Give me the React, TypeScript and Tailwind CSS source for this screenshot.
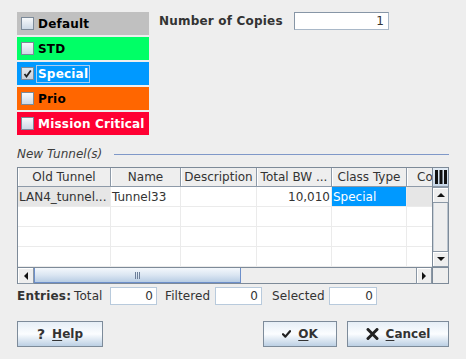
import React from "react";

const items = [
  { label: "Default", bg: "bg-[#c0c0c0]", fg: "text-black", checked: false },
  { label: "STD", bg: "bg-[#00ff66]", fg: "text-black", checked: false },
  { label: "Special", bg: "bg-[#0099ff]", fg: "text-white", checked: true },
  { label: "Prio", bg: "bg-[#ff6600]", fg: "text-black", checked: false },
  { label: "Mission Critical", bg: "bg-[#ff0033]", fg: "text-white", checked: false },
];

function CheckBox({ checked }: { checked: boolean }) {
  return (
    <div
      className={
        "w-[13px] h-[13px] shrink-0 border border-[#7c8a99] flex items-center justify-center " +
        (checked
          ? "bg-gradient-to-b from-[#e4e8ec] to-[#c7d0da]"
          : "bg-gradient-to-b from-[#f7f9fb] to-[#cdd9e6]")
      }
    >
      {checked && (
        <svg width="9" height="9" viewBox="0 0 9 9">
          <path d="M1.5 5 L3.5 7.5 L7.8 1.5" stroke="#222" strokeWidth="1.8" fill="none" />
        </svg>
      )}
    </div>
  );
}

function Arrow({ dir }: { dir: "up" | "down" | "left" | "right" }) {
  const d = {
    up: "M0 4 L4 0 L8 4 Z",
    down: "M0 0 L8 0 L4 4 Z",
    left: "M4 0 L4 8 L0 4 Z",
    right: "M0 0 L4 4 L0 8 Z",
  }[dir];
  const vert = dir === "up" || dir === "down";
  return (
    <svg width={vert ? 8 : 4} height={vert ? 4 : 8} viewBox={vert ? "0 0 8 4" : "0 0 4 8"}>
      <path d={d} fill="#111" />
    </svg>
  );
}

function ScrollButton({ dir, className = "" }: { dir: "up" | "down" | "left" | "right"; className?: string }) {
  return (
    <div
      className={
        "w-[16px] h-[16px] bg-[#eeeeee] border border-[#8a97a5] shadow-[inset_1px_1px_0_#ffffff] flex items-center justify-center " +
        className
      }
    >
      <Arrow dir={dir} />
    </div>
  );
}

const cols = [
  { w: "w-[93px]", head: "Old Tunnel" },
  { w: "w-[70px]", head: "Name" },
  { w: "w-[76px]", head: "Description" },
  { w: "w-[75px]", head: "Total BW ..." },
  { w: "w-[75px]", head: "Class Type" },
  { w: "w-[25px]", head: "Co" },
];

function Field({ value, w }: { value: string; w: string }) {
  return (
    <div className={"h-[18px] shrink-0 bg-white border border-[#b8cadc] flex items-center justify-end pr-[3px] " + w}>
      {value}
    </div>
  );
}

function Button({ icon, mn, rest, w }: { icon: React.ReactNode; mn: string; rest: string; w: string }) {
  return (
    <button
      type="button"
      className={
        "h-[26px] border border-[#7d8b9a] bg-gradient-to-b from-[#e6eef6] via-[#fbfdff] to-[#bcd0e4] flex items-center justify-center gap-[7px] font-bold text-[#333333] " +
        w
      }
    >
      {icon}
      <span>
        <span className="underline underline-offset-2">{mn}</span>
        {rest}
      </span>
    </button>
  );
}

export default function App() {
  return (
    <div className="w-[466px] h-[359px] bg-[#eeeeee] text-[12px] leading-none text-[#333333] overflow-hidden pt-[12px] px-[17px] [font-family:'DejaVu_Sans',sans-serif]">
      <div className="flex">
        <div className="w-[132px] flex flex-col gap-[2px]">
          {items.map((it) => (
            <div key={it.label} className={"h-[23px] flex items-center pl-[4px] gap-[2px] font-bold tracking-[0.2px] whitespace-nowrap " + it.bg + " " + it.fg}>
              <CheckBox checked={it.checked} />
              <span
                className={
                  "px-[1px] py-[2px] border " + (it.checked ? "border-[#a8cdf0]" : "border-transparent")
                }
              >
                {it.label}
              </span>
            </div>
          ))}
        </div>
        <div className="ml-[10px] h-[18px] flex items-center">
          <span className="w-[135px] font-bold tracking-[0.2px]">Number of Copies</span>
          <div className="w-[95px] h-[18px] bg-white border border-[#8796a6] border-b-[#a9b8c8] border-r-[#a9b8c8] flex items-center justify-end pr-[4px]">
            1
          </div>
        </div>
      </div>

      <div className="mt-[12px] h-[14px] flex items-center">
        <span className="italic text-[#3d3d3d]">New Tunnel(s)</span>
        <div className="flex-1 ml-[12px] h-px bg-[#7f98c8]" />
      </div>

      <div className="mt-[6px] w-[432px] border border-[#7d8a98] flex flex-col bg-white">
        <div className="flex">
          <div className="w-[414px] flex flex-col">
            <div className="flex h-[19px] bg-[#eeeeee] border-b border-[#8e9aa8]">
              {cols.map((c, i) => (
                <div
                  key={c.head}
                  className={
                    "h-full flex items-center overflow-hidden whitespace-nowrap shadow-[inset_1px_0_0_#ffffff] " +
                    c.w +
                    (i < cols.length - 1 ? " border-r border-[#8e9aa8] justify-center" : " pl-[10px]")
                  }
                >
                  {c.head}
                </div>
              ))}
            </div>
            {[0, 1, 2, 3].map((r) => (
              <div key={r} className="flex h-[20px] border-b border-[#ebebeb]">
                {cols.map((c, i) => {
                  let cls = "h-full flex items-center overflow-hidden whitespace-nowrap " + c.w;
                  if (i < cols.length - 1) cls += " border-r border-[#ebebeb]";
                  let text = "";
                  if (r === 0) {
                    if (i === 0) {
                      cls += " bg-[#e6e6e6] pl-[1px]";
                      text = "LAN4_tunnel...";
                    } else if (i === 1) {
                      cls += " pl-[1px]";
                      text = "Tunnel33";
                    } else if (i === 3) {
                      cls += " justify-end pr-[1px]";
                      text = "10,010";
                    } else if (i === 4) {
                      cls += " bg-[#0099ff] text-white pl-[1px]";
                      text = "Special";
                    } else if (i === 5) {
                      cls += " bg-[#e6e6e6]";
                    }
                  }
                  return (
                    <div key={i} className={cls}>
                      {text}
                    </div>
                  );
                })}
              </div>
            ))}
          </div>
          <div className="w-[16px] flex flex-col border-l border-[#7d8a98] bg-[#eeeeee]">
            <div className="h-[19px] bg-gradient-to-b from-[#e3ecf5] to-[#c6d6e7] border-b border-[#8e9aa8] flex items-center justify-center">
              <svg width="12" height="14" viewBox="0 0 12 14">
                <rect x="0" y="0" width="3" height="14" fill="#111" />
                <rect x="4.5" y="0" width="3" height="14" fill="#111" />
                <rect x="9" y="0" width="3" height="14" fill="#111" />
              </svg>
            </div>
            <ScrollButton dir="up" className="w-[15px] border-l-0" />
            <div className="flex-1 bg-[#eeeeee] border-r border-[#b8c2cc] shadow-[inset_1px_0_0_#c9d1d9]" />
            <ScrollButton dir="down" className="w-[15px] border-l-0" />
          </div>
        </div>
        <div className="flex h-[16px] border-t border-[#7d8a98] bg-[#eeeeee]">
          <ScrollButton dir="left" className="h-[15px] border-t-0 border-l-0" />
          <div className="w-[207px] h-[15px] border border-t-0 border-[#6d8fca] bg-gradient-to-b from-[#f4f8fc] via-[#dbe6f2] to-[#b8cde4] flex items-center justify-center gap-[1px]">
            <div className="w-px h-[7px] bg-[#6d7f99]" />
            <div className="w-px h-[7px] bg-[#6d7f99]" />
            <div className="w-px h-[7px] bg-[#6d7f99]" />
          </div>
          <div className="flex-1" />
          <ScrollButton dir="right" className="h-[15px] border-t-0" />
          <div className="w-[16px] h-[15px] border-l border-[#7d8a98] bg-[#eeeeee]" />
        </div>
      </div>

      <div className="mt-[3px] h-[18px] flex items-center whitespace-nowrap">
        <span className="w-[57px] font-bold tracking-[0.2px]">Entries:</span>
        <span className="w-[36px] tracking-[0.1px]">Total</span>
        <Field value="0" w="w-[47px]" />
        <span className="ml-[8px] w-[50px] tracking-[0.1px]">Filtered</span>
        <Field value="0" w="w-[47px]" />
        <span className="ml-[10px] w-[57px] tracking-[0.1px]">Selected</span>
        <Field value="0" w="w-[48px]" />
      </div>

      <div className="mt-[16px] flex">
        <Button icon={<span className="text-[14px] font-bold">?</span>} mn="H" rest="elp" w="w-[86px]" />
        <div className="ml-auto flex gap-[10px]">
          <Button
            icon={
              <svg width="9" height="8" viewBox="0 0 9 8">
                <path d="M1 4.2 L3.4 6.6 L8 1.2" stroke="#222" strokeWidth="2.2" fill="none" strokeLinecap="round" strokeLinejoin="round" />
              </svg>
            }
            mn="O"
            rest="K"
            w="w-[74px]"
          />
          <Button
            icon={
              <svg width="13" height="12" viewBox="0 0 13 12">
                <path d="M2 1.5 L11 10.5 M11 1.5 L2 10.5" stroke="#222" strokeWidth="3" fill="none" strokeLinecap="round" />
              </svg>
            }
            mn="C"
            rest="ancel"
            w="w-[102px]"
          />
        </div>
      </div>
    </div>
  );
}
